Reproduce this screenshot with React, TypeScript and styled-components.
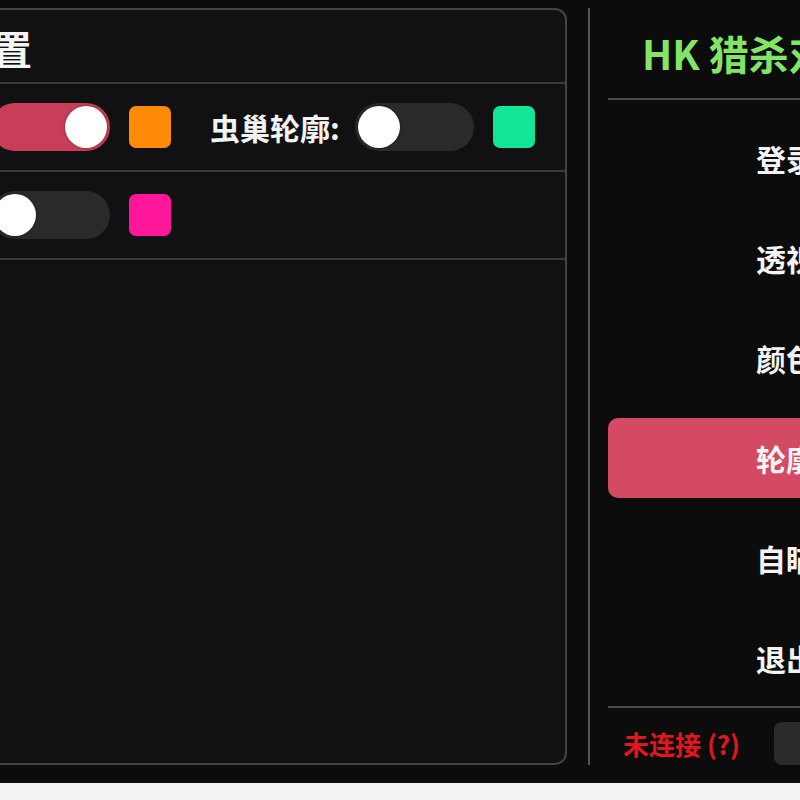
import styled, { createGlobalStyle } from 'styled-components';

const GlobalStyle = createGlobalStyle`
  html, body {
    margin: 0;
    padding: 0;
    background: #f3f3f3;
  }

  body {
    font-family: "Noto Sans CJK SC", "Noto Sans", sans-serif;
  }
`;

const Screen = styled.div`
  width: 800px;
  height: 783px;
  overflow: hidden;
  background: #0c0c0d;
`;

// the window is wider than the shot, so the row starts left of the frame
const Frame = styled.div`
  display: flex;
  height: 100%;
  box-sizing: border-box;
  padding: 8px 0 18px;
  margin-left: -180px;
`;

const Panel = styled.section`
  flex: 0 0 747px;
  min-width: 0;
  box-sizing: border-box;
  display: flex;
  flex-direction: column;
  border: 2px solid #444446;
  border-radius: 12px;
  background: #111113;
`;

const PanelHeader = styled.div`
  height: 74px;
  display: flex;
  align-items: center;
  padding: 4px 0 0 50px;
  box-sizing: border-box;
  border-bottom: 2px solid #3a3a3c;
`;

const PanelTitle = styled.h2`
  margin: 0;
  font-size: 40px;
  font-weight: 700;
  color: #f4f4f4;
`;

const Row = styled.div`
  height: 86px;
  display: flex;
  align-items: center;
  gap: 39px;
  padding-left: 20px;
  border-bottom: 2px solid #3a3a3c;
`;

const Group = styled.div`
  display: flex;
  align-items: center;
`;

const Label = styled.span<{ $width?: number }>`
  ${({ $width }) => ($width ? `width: ${$width}px;` : '')}
  margin-right: 15px;
  font-size: 30px;
  font-weight: 700;
  color: #f2f2f2;
  white-space: nowrap;
`;

const Toggle = styled.div<{ $on: boolean }>`
  position: relative;
  width: 119px;
  height: 48px;
  border-radius: 24px;
  background: ${({ $on }) => ($on ? '#c83d57' : '#2a2a2b')};
  margin-right: 19px;

  &::after {
    content: '';
    position: absolute;
    top: 3px;
    left: ${({ $on }) => ($on ? '74px' : '3px')};
    width: 42px;
    height: 42px;
    border-radius: 50%;
    background: #ffffff;
    box-shadow: 0 0 3px rgba(0, 0, 0, 0.4);
  }
`;

const Swatch = styled.div<{ $color: string }>`
  width: 42px;
  height: 42px;
  border-radius: 7px;
  background: ${({ $color }) => $color};
`;

const Separator = styled.div`
  flex: 0 0 2px;
  margin-left: 21px;
  background: #555557;
`;

const Sidebar = styled.aside`
  flex: 0 0 360px;
  margin-left: 18px;
  display: flex;
  flex-direction: column;
`;

const Brand = styled.div`
  height: 90px;
  display: flex;
  align-items: center;
  padding-left: 34px;
  border-bottom: 2px solid #4a4a4c;
  font-size: 40px;
  font-weight: 700;
  color: #84e466;
  white-space: nowrap;
`;

const Menu = styled.nav`
  display: flex;
  flex-direction: column;
  gap: 20px;
  padding: 18px 0 8px;
  border-bottom: 2px solid #4a4a4c;
`;

const MenuItem = styled.div<{ $active?: boolean }>`
  height: 80px;
  display: flex;
  align-items: center;
  padding-left: 148px;
  border-radius: 10px;
  background: ${({ $active }) => ($active ? '#d34a62' : 'transparent')};
  font-size: 30px;
  font-weight: 700;
  color: #f4f4f4;
`;

const Status = styled.div`
  flex: 1;
  display: flex;
  align-items: center;
  padding: 14px 0 0 15px;
`;

const StatusText = styled.span`
  font-size: 26px;
  font-weight: 700;
  color: #e3161f;
  margin-right: 34px;
  white-space: nowrap;
`;

const StatusBox = styled.div`
  width: 180px;
  height: 43px;
  border-radius: 8px;
  background: #2b2b2c;
`;

interface Outline {
  label: string;
  on: boolean;
  color: string;
}

const rows: Outline[][] = [
  [
    { label: '玩家轮廓:', on: true, color: '#ff8a05' },
    { label: '虫巢轮廓:', on: false, color: '#12e594' },
  ],
  [{ label: '物品轮廓:', on: false, color: '#ff1799' }],
];

const menu = ['登录', '透视', '颜色', '轮廓', '自瞄', '退出'];

const App = () => (
  <>
    <GlobalStyle />
    <Screen>
      <Frame>
        <Panel>
          <PanelHeader>
            <PanelTitle>轮廓设置</PanelTitle>
          </PanelHeader>
          {rows.map((row, i) => (
            <Row key={i}>
              {row.map((item, j) => (
                <Group key={item.label}>
                  <Label $width={j === 0 ? 134 : undefined}>{item.label}</Label>
                  <Toggle $on={item.on} />
                  <Swatch $color={item.color} />
                </Group>
              ))}
            </Row>
          ))}
        </Panel>
        <Separator />
        <Sidebar>
          <Brand>HK 猎杀对决助手</Brand>
          <Menu>
            {menu.map((name) => (
              <MenuItem key={name} $active={name === '轮廓'}>
                {name}
              </MenuItem>
            ))}
          </Menu>
          <Status>
            <StatusText>未连接 (?)</StatusText>
            <StatusBox />
          </Status>
        </Sidebar>
      </Frame>
    </Screen>
  </>
);

export default App;
